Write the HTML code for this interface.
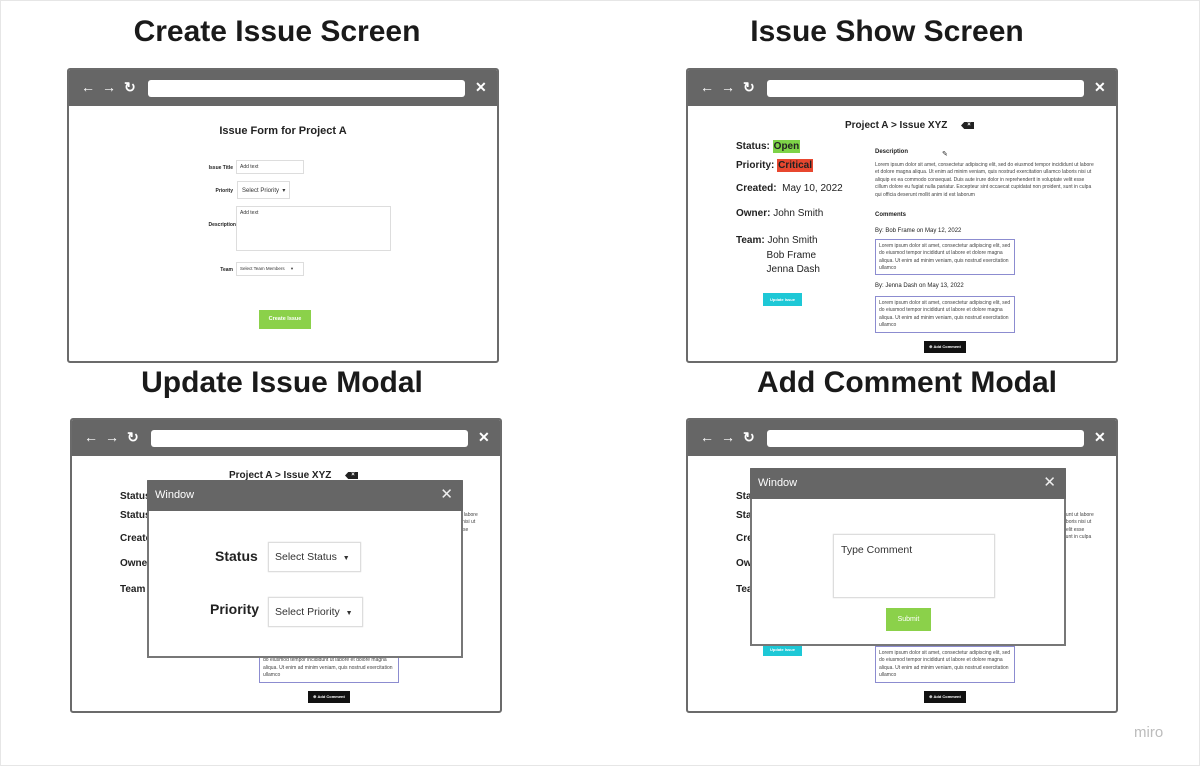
<!DOCTYPE html>
<html><head><meta charset="utf-8">
<style>
*{box-sizing:border-box;margin:0;padding:0}
body{width:1200px;height:766px;background:#fff;font-family:"Liberation Sans",sans-serif;position:relative;overflow:hidden}
.page{position:absolute;left:0;top:0;width:1200px;height:766px;border:1px solid #e6e6e6}
.h{position:absolute;font-weight:bold;font-size:30px;color:#1a1a1a;text-align:center;width:500px}
.fr{position:absolute;width:432px;height:295px;border:2px solid #6b6b6b;border-radius:3px;background:#fff;overflow:hidden}
.bar{position:absolute;left:0;top:0;right:0;height:36px;background:#666}
.addr{position:absolute;left:79px;top:10px;width:317px;height:17px;background:#fff;border-radius:3px}
.ic{position:absolute;top:9px;color:#fff;font-size:14px;font-weight:bold}
.a{position:absolute;white-space:nowrap;color:#222}
.b{font-weight:bold}
.lorem{position:absolute;font-size:5px;line-height:7.4px;color:#444}
.box{position:absolute;border:1px solid #8c8cd0;background:#fff;padding:3px 3px;font-size:5px;line-height:7.4px;color:#444}
.inp{position:absolute;border:1px solid #ddd;background:#fff;font-size:5px;color:#333;padding:3px;white-space:nowrap;overflow:hidden}
.modal{position:absolute;width:316px;height:178px;border:2px solid #777;background:#fff;border-top:none}
.mh{position:absolute;left:-2px;right:-2px;top:0;height:31px;background:#666;color:#fff;font-size:11px;padding:9px 8px;border-radius:2px 2px 0 0}
.mx{position:absolute;right:10px;top:5px;font-size:15px;color:#eee;font-weight:normal}
.sel{position:absolute;border:1px solid #ddd;background:#fff;font-size:10.5px;color:#333;padding:0 6px;box-shadow:0 0 1px #ccc;white-space:nowrap;overflow:hidden}
.bk{position:absolute;width:13px;height:7px;background:#222;clip-path:polygon(25% 0,100% 0,100% 100%,25% 100%,0 50%);color:#fff;font-size:6px;line-height:7px;text-align:center;padding-left:3px;font-weight:bold}
</style></head><body>
<div class="page"></div>
<div class="h" style="left:27px;top:15px">Create Issue Screen</div>
<div class="h" style="left:637px;top:15px">Issue Show Screen</div>
<div class="h" style="left:32px;top:366px">Update Issue Modal</div>
<div class="h" style="left:657px;top:366px">Add Comment Modal</div>
<div class="a" style="left:1134px;top:724px;font-size:15px;color:#bcbcbc">miro</div>

<div class="fr" style="left:67px;top:68px">
 <div class="bar"><div class="ic" style="left:12px">←</div><div class="ic" style="left:33px">→</div><div class="ic" style="left:55px">↻</div><div class="addr"></div><div class="ic" style="left:406px">✕</div></div>
 <div class="a b" style="left:0;width:428px;text-align:center;top:55px;font-size:11px">Issue Form for Project A</div>
 <div class="a b" style="left:120px;width:44px;text-align:right;top:95px;font-size:5px">Issue Title</div>
 <div class="inp" style="left:167px;top:90px;width:68px;height:14px">Add text</div>
 <div class="a b" style="left:120px;width:44px;text-align:right;top:118px;font-size:5px">Priority</div>
 <div class="inp" style="left:168px;top:111px;width:53px;height:18px;font-size:6px;padding:5px 4px">Select Priority &nbsp;▾</div>
 <div class="a b" style="left:110px;width:57px;text-align:right;top:152px;font-size:5px">Description</div>
 <div class="inp" style="left:167px;top:136px;width:155px;height:45px">Add text</div>
 <div class="a b" style="left:120px;width:44px;text-align:right;top:197px;font-size:5px">Team</div>
 <div class="inp" style="left:167px;top:192px;width:68px;height:14px;font-size:4.5px">Select Team Members &nbsp; &nbsp; ▾</div>
 <div class="a b" style="left:190px;top:240px;width:52px;height:19px;background:#8bd14a;color:#fff;font-size:5.5px;text-align:center;line-height:19px">Create Issue</div>
</div>

<div class="fr" style="left:686px;top:68px">
 <div class="bar"><div class="ic" style="left:12px">←</div><div class="ic" style="left:33px">→</div><div class="ic" style="left:55px">↻</div><div class="addr"></div><div class="ic" style="left:406px">✕</div></div>
 <div class="a b" style="left:157px;top:50px;font-size:10px">Project A &gt; Issue XYZ</div>
 <div class="bk" style="left:273px;top:52px">×</div>
 <div class="a b" style="left:48px;top:71px;font-size:10px">Status: <span style="background:#7ed348;padding:1px 1px">Open</span></div>
 <div class="a b" style="left:48px;top:90px;font-size:10px">Priority: <span style="background:#e8472f;padding:1px 1px">Critical</span></div>
 <div class="a" style="left:48px;top:113px;font-size:10px"><b>Created:</b>&nbsp; May 10, 2022</div>
 <div class="a" style="left:48px;top:138px;font-size:10px"><b>Owner:</b> John Smith</div>
 <div class="a" style="left:48px;top:164px;font-size:10px;line-height:14.5px"><b>Team:</b> John Smith<br>&nbsp;&nbsp;&nbsp;&nbsp;&nbsp;&nbsp;&nbsp;&nbsp;&nbsp;&nbsp;&nbsp;Bob Frame<br>&nbsp;&nbsp;&nbsp;&nbsp;&nbsp;&nbsp;&nbsp;&nbsp;&nbsp;&nbsp;&nbsp;Jenna Dash</div>
 <div class="a b" style="left:75px;top:223px;width:39px;height:13px;background:#1ec8d6;color:#fff;font-size:4px;text-align:center;line-height:13px">Update Issue</div>
 <div class="a b" style="left:187px;top:79px;font-size:6px">Description</div>
 <div class="a" style="left:254px;top:80px;font-size:7px">✎</div>
 <div class="lorem" style="left:187px;top:92px;width:222px">Lorem ipsum dolor sit amet, consectetur adipiscing elit, sed do eiusmod tempor incididunt ut labore et dolore magna aliqua. Ut enim ad minim veniam, quis nostrud exercitation ullamco laboris nisi ut aliquip ex ea commodo consequat. Duis aute irure dolor in reprehenderit in voluptate velit esse cillum dolore eu fugiat nulla pariatur. Excepteur sint occaecat cupidatat non proident, sunt in culpa qui officia deserunt mollit anim id est laborum</div>
 <div class="a b" style="left:187px;top:142px;font-size:6px">Comments</div>
 <div class="a" style="left:187px;top:158px;font-size:6px">By: Bob Frame on May 12, 2022</div>
 <div class="box" style="left:187px;top:169px;width:140px;height:36px">Lorem ipsum dolor sit amet, consectetur adipiscing elit, sed do eiusmod tempor incididunt ut labore et dolore magna aliqua. Ut enim ad minim veniam, quis nostrud exercitation ullamco</div>
 <div class="a" style="left:187px;top:213px;font-size:6px">By: Jenna Dash on May 13, 2022</div>
 <div class="box" style="left:187px;top:226px;width:140px;height:37px">Lorem ipsum dolor sit amet, consectetur adipiscing elit, sed do eiusmod tempor incididunt ut labore et dolore magna aliqua. Ut enim ad minim veniam, quis nostrud exercitation ullamco</div>
 <div class="a b" style="left:236px;top:271px;width:42px;height:12px;background:#111;color:#fff;font-size:4px;text-align:center;line-height:12px">⊕ Add Comment</div>
</div>

<div class="fr" style="left:70px;top:418px">
 <div class="bar"><div class="ic" style="left:12px">←</div><div class="ic" style="left:33px">→</div><div class="ic" style="left:55px">↻</div><div class="addr"></div><div class="ic" style="left:406px">✕</div></div>
 <div class="a b" style="left:157px;top:50px;font-size:10px">Project A &gt; Issue XYZ</div>
 <div class="bk" style="left:273px;top:52px">×</div>
 <div class="a b" style="left:48px;top:71px;font-size:10px">Status</div>
 <div class="a b" style="left:48px;top:90px;font-size:10px">Status</div>
 <div class="a b" style="left:48px;top:113px;font-size:10px">Created</div>
 <div class="a b" style="left:48px;top:138px;font-size:10px">Owner</div>
 <div class="a b" style="left:48px;top:164px;font-size:10px">Team</div>
 <div class="lorem" style="left:187px;top:92px;width:222px">Lorem ipsum dolor sit amet, consectetur adipiscing elit, sed do eiusmod tempor incididunt ut labore et dolore magna aliqua. Ut enim ad minim veniam, quis nostrud exercitation ullamco laboris nisi ut aliquip ex ea commodo consequat. Duis aute irure dolor in reprehenderit in voluptate velit esse cillum dolore eu fugiat nulla pariatur. Excepteur sint occaecat</div>
 <div class="box" style="left:187px;top:226px;width:140px;height:37px">Lorem ipsum dolor sit amet, consectetur adipiscing elit, sed do eiusmod tempor incididunt ut labore et dolore magna aliqua. Ut enim ad minim veniam, quis nostrud exercitation ullamco</div>
 <div class="a b" style="left:236px;top:271px;width:42px;height:12px;background:#111;color:#fff;font-size:4px;text-align:center;line-height:12px">⊕ Add Comment</div>
 <div class="modal" style="left:75px;top:60px">
  <div class="mh">Window<span class="mx">✕</span></div>
  <div class="a b" style="left:66px;top:68px;font-size:14px">Status</div>
  <div class="sel" style="left:119px;top:62px;width:93px;height:30px;line-height:28px">Select Status &nbsp;<span style="font-size:7px">▼</span></div>
  <div class="a b" style="left:61px;top:121px;font-size:14px">Priority</div>
  <div class="sel" style="left:119px;top:117px;width:95px;height:30px;line-height:28px">Select Priority &nbsp;<span style="font-size:7px">▼</span></div>
 </div>
</div>

<div class="fr" style="left:686px;top:418px">
 <div class="bar"><div class="ic" style="left:12px">←</div><div class="ic" style="left:33px">→</div><div class="ic" style="left:55px">↻</div><div class="addr"></div><div class="ic" style="left:406px">✕</div></div>
 <div class="a b" style="left:48px;top:71px;font-size:10px">Status</div>
 <div class="a b" style="left:48px;top:90px;font-size:10px">Status</div>
 <div class="a b" style="left:48px;top:113px;font-size:10px">Created</div>
 <div class="a b" style="left:48px;top:138px;font-size:10px">Owner</div>
 <div class="a b" style="left:48px;top:164px;font-size:10px">Team</div>
 <div class="lorem" style="left:187px;top:92px;width:222px">Lorem ipsum dolor sit amet, consectetur adipiscing elit, sed do eiusmod tempor incididunt ut labore et dolore magna aliqua. Ut enim ad minim veniam, quis nostrud exercitation ullamco laboris nisi ut aliquip ex ea commodo consequat. Duis aute irure dolor in reprehenderit in voluptate velit esse cillum dolore eu fugiat nulla pariatur. Excepteur sint occaecat cupidatat non proident, sunt in culpa qui officia deserunt mollit anim id est</div>
 <div class="a b" style="left:75px;top:223px;width:39px;height:13px;background:#1ec8d6;color:#fff;font-size:4px;text-align:center;line-height:13px">Update Issue</div>
 <div class="box" style="left:187px;top:226px;width:140px;height:37px">Lorem ipsum dolor sit amet, consectetur adipiscing elit, sed do eiusmod tempor incididunt ut labore et dolore magna aliqua. Ut enim ad minim veniam, quis nostrud exercitation ullamco</div>
 <div class="a b" style="left:236px;top:271px;width:42px;height:12px;background:#111;color:#fff;font-size:4px;text-align:center;line-height:12px">⊕ Add Comment</div>
 <div class="modal" style="left:62px;top:48px">
  <div class="mh">Window<span class="mx">✕</span></div>
  <div class="sel" style="left:81px;top:66px;width:162px;height:64px;line-height:30px;padding:0 7px">Type Comment</div>
  <div class="a" style="left:134px;top:140px;width:45px;height:23px;background:#8bd14a;color:#fff;font-size:7px;text-align:center;line-height:23px">Submit</div>
 </div>
</div>
</body></html>
